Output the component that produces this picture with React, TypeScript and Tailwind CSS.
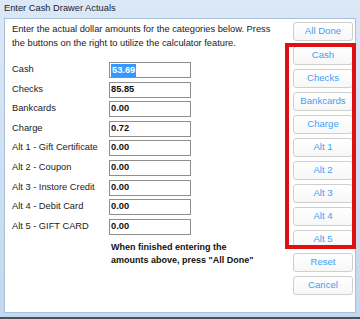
import React from 'react';

const ROWS = [
  { label: 'Cash', value: '53.69', selected: true },
  { label: 'Checks', value: '85.85' },
  { label: 'Bankcards', value: '0.00' },
  { label: 'Charge', value: '0.72' },
  { label: 'Alt 1 - Gift Certificate', value: '0.00' },
  { label: 'Alt 2 - Coupon', value: '0.00' },
  { label: 'Alt 3 - Instore Credit', value: '0.00' },
  { label: 'Alt 4 - Debit Card', value: '0.00' },
  { label: 'Alt 5 - GIFT CARD', value: '0.00' },
];

const CALC_BUTTONS = ['Cash', 'Checks', 'Bankcards', 'Charge', 'Alt 1', 'Alt 2', 'Alt 3', 'Alt 4', 'Alt 5'];

const Btn = ({ label }: { label: string }) => (
  <button className="w-[60px] h-[19px] shrink-0 rounded-[3px] border border-[#cfcfcf] bg-gradient-to-b from-white to-[#f7f7f7] text-[9.6px] leading-none text-[#3f9ff5] pb-[1px]">
    {label}
  </button>
);

export default function App() {
  return (
    <div
      className="w-[360px] h-[319px] bg-gradient-to-b from-[#dbe8f6] to-[#c3d8ee] flex flex-col overflow-hidden border-b-[2px] border-[#4a4f55]"
      style={{ fontFamily: '"Liberation Sans", Arial, sans-serif' }}
    >
      <div className="h-[18px] shrink-0 px-[4px] flex items-center text-[9.3px] text-[#1a2433]">Enter Cash Drawer Actuals</div>
      <div className="relative flex-1 mx-[4px] mb-[4px] bg-white border border-[#a8c0da] flex">
        <div className="flex-1 pl-[7px] pt-[3px]">
          <p className="text-[9.3px] leading-[14px] text-[#1a1a1a] whitespace-nowrap">
            Enter the actual dollar amounts for the categories below. Press
            <br />
            the buttons on the right to utilize the calculator feature.
          </p>
          <div className="mt-[12px] flex flex-col gap-[3.6px]">
            {ROWS.map((r) => (
              <div key={r.label} className="flex items-center h-[16px]">
                <span className="w-[97px] text-[9.3px] text-[#1a1a1a] whitespace-nowrap">{r.label}</span>
                <div className="w-[82px] h-[16px] border border-[#8e8e8e] bg-white flex items-center px-[1px] text-[9.3px] font-bold text-[#111]">
                  {r.selected ? <span className="bg-[#3399ff] text-white px-[1px] leading-[13px]">{r.value}</span> : r.value}
                </div>
              </div>
            ))}
          </div>
          <p className="mt-[6px] ml-[99px] text-[9px] leading-[13px] font-bold text-[#111] whitespace-nowrap">
            When finished entering the
            <br />
            amounts above, press "All Done"
          </p>
        </div>
        <div className="w-[62px] shrink-0 pt-[3px] flex flex-col gap-[4px]">
          <Btn label="All Done" />
          <div className="-mt-[3px]" />
          {CALC_BUTTONS.map((b) => (
            <Btn key={b} label={b} />
          ))}
          <Btn label="Reset" />
          <Btn label="Cancel" />
        </div>
        <div className="absolute left-[280px] top-[24px] w-[71px] h-[206px] border-[4px] border-[#e01010] pointer-events-none" />
      </div>
    </div>
  );
}
